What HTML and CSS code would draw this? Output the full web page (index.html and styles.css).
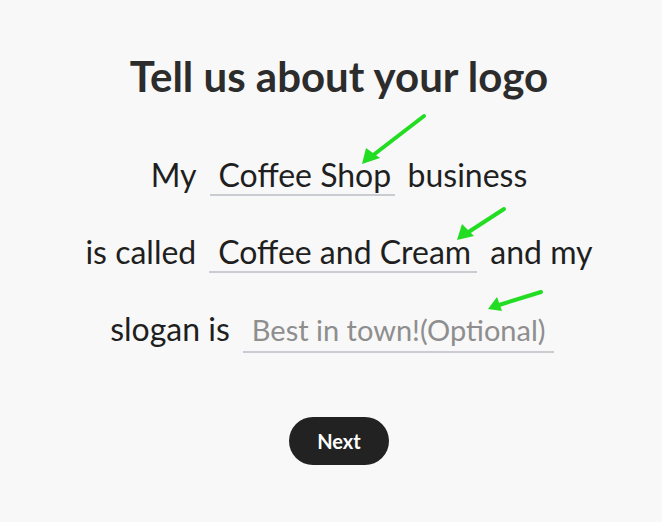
FILE: index.html
```html
<!DOCTYPE html>
<html lang="en">
<head>
<meta charset="utf-8">
<title>Tell us about your logo</title>
<link rel="stylesheet" href="styles.css">
</head>
<body>
<main class="page">
  <h1 class="title">Tell us about your logo</h1>
  <div class="sentence">
    <div class="row">
      <span class="word">My</span>
      <span class="field field-shop">Coffee Shop</span>
      <span class="word">business</span>
    </div>
    <div class="row">
      <span class="word">is called</span>
      <span class="field field-name">Coffee and Cream</span>
      <span class="word">and my</span>
    </div>
    <div class="row row-last">
      <span class="word">slogan is</span>
      <span class="field field-slogan placeholder">Best in town!(Optional)</span>
    </div>
  </div>
  <button class="next" type="button">Next</button>
  <svg class="annotations" width="662" height="522" viewBox="0 0 662 522" aria-hidden="true">
    <g stroke="#22dd22" stroke-width="4" stroke-linecap="round" fill="#22dd22">
      <line x1="424" y1="116" x2="372" y2="156"/>
      <polygon stroke="none" points="362,164 366,148 380,158"/>
      <line x1="504" y1="209" x2="467" y2="233"/>
      <polygon stroke="none" points="457,240 462,224 474,236"/>
      <line x1="541" y1="292" x2="499" y2="305"/>
      <polygon stroke="none" points="488,309 497,297 502,311"/>
    </g>
  </svg>
</main>
</body>
</html>
```

FILE: styles.css
```css
html, body {
  margin: 0;
  padding: 0;
  background: #f8f8f8;
}

body {
  font-family: "Lato", "Liberation Sans", sans-serif;
  color: #2c2c2c;
  width: 662px;
  height: 522px;
  overflow: hidden;
}

.page {
  position: relative;
  box-sizing: border-box;
  width: 662px;
  height: 522px;
  padding: 52px 0 0 16px;
  display: flex;
  flex-direction: column;
  align-items: center;
}

.title {
  margin: 0;
  font-size: 42px;
  line-height: 48px;
  font-weight: 700;
  color: #2c2c2c;
}

.sentence {
  margin-top: 56px;
  display: flex;
  flex-direction: column;
  align-items: center;
  gap: 37px;
}

.row {
  display: flex;
  align-items: baseline;
  gap: 13px;
  height: 40px;
  font-size: 32px;
  line-height: 1.2;
  color: #1f1f1f;
}

.row-last {
  padding-right: 14px;
}

.field {
  box-sizing: border-box;
  padding: 0 8px 0 9px;
  border-bottom: 2px solid #c9cdd2;
  white-space: nowrap;
}

.field-shop { width: 185px; }
.field-name { width: 268px; }
.field-slogan { width: 311px; }

.placeholder {
  color: #8e8e8e;
  font-size: 29px;
  padding-bottom: 3px;
}

.next {
  margin-top: 67px;
  width: 100px;
  height: 48px;
  border: none;
  border-radius: 24px;
  background: #222222;
  color: #ffffff;
  font-family: "Lato", "Liberation Sans", sans-serif;
  font-size: 20px;
  font-weight: 700;
  cursor: pointer;
}

.annotations {
  position: absolute;
  left: 0;
  top: 0;
  pointer-events: none;
}
```
